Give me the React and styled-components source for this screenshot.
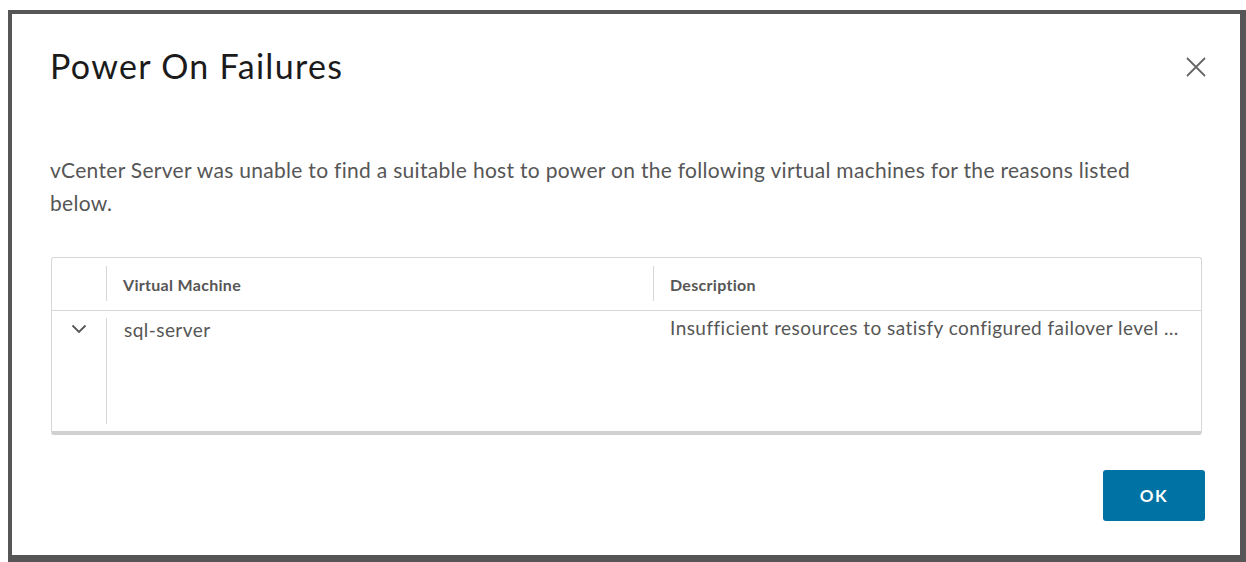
import React from "react";
import styled, { createGlobalStyle } from "styled-components";

const GlobalStyle = createGlobalStyle`
  html, body { margin: 0; padding: 0; background: #ffffff; overflow: hidden; }
  body { font-family: Lato, "Open Sans", "Liberation Sans", sans-serif; }
`;

const Backdrop = styled.div`
  margin: 10px 0 0 8px;
  width: 1238px;
  height: 552px;
  background: #565656;
  padding: 4px 0 0 4px;
  box-sizing: border-box;
`;

const Dialog = styled.div`
  width: 1228px;
  height: 541px;
  background: #ffffff;
  box-sizing: border-box;
  padding: 0 35px 0 38px;
  display: flex;
  flex-direction: column;
  color: #565656;
`;

const Header = styled.div`
  display: flex;
  align-items: center;
  justify-content: space-between;
  height: 103px;
`;

const Title = styled.h1`
  margin: 0;
  font-size: 34px;
  font-weight: 400;
  color: #1b1b1b;
  letter-spacing: 1.3px;
`;

const CloseButton = styled.button`
  border: 0;
  background: none;
  padding: 0;
  width: 22px;
  height: 22px;
  margin-right: -2px;
  margin-top: 3px;
  display: flex;
  align-items: center;
  justify-content: center;
  color: #666666;
`;

const Message = styled.p`
  margin: 36px 0 0 0;
  font-size: 21px;
  line-height: 33px;
  letter-spacing: 0.3px;
  color: #565656;
  max-width: 1110px;
`;

const Grid = styled.div`
  margin: 38px 0 0 1px;
  width: 1151px;
  height: 178px;
  border: 1px solid #d7d7d7;
  border-bottom: 4px solid #d0d0d0;
  border-radius: 3px;
  box-sizing: border-box;
  display: grid;
  grid-template-columns: 54px 547px 1fr;
  grid-template-rows: 53px 1fr;
`;

const HeadCell = styled.div`
  display: flex;
  align-items: center;
  border-bottom: 1px solid #d7d7d7;
  position: relative;
  padding-left: ${(p) => (p.$pad ? "17px" : "0")};
  font-size: 16px;
  font-weight: 700;
  letter-spacing: 0.3px;
  color: #565656;
  ${(p) =>
    p.$divider &&
    `&::before {
      content: "";
      position: absolute;
      left: 0;
      top: 8px;
      bottom: 9px;
      border-left: 1px solid #d7d7d7;
    }`}
`;

const BodyCell = styled.div`
  display: flex;
  align-items: flex-start;
  padding: ${(p) => (p.$pad ? (p.$line ? "0 20px 0 17px" : "5px 20px 0 17px") : "0")};
  margin: ${(p) => (p.$line ? "7px 0 7px 0" : p.$center ? "13px 0 0 0" : "0")};
  font-size: 19px;
  line-height: 23px;
  letter-spacing: 0.45px;
  color: #565656;
  border-left: ${(p) => (p.$line ? "1px solid #d7d7d7" : "none")};
  min-width: 0;
  justify-content: ${(p) => (p.$center ? "center" : "flex-start")};
`;

const Ellipsis = styled.span`
  white-space: nowrap;
  overflow: hidden;
  text-overflow: ellipsis;
  min-width: 0;
`;

const Footer = styled.div`
  display: flex;
  justify-content: flex-end;
  margin-top: 35px;
`;

const PrimaryButton = styled.button`
  width: 102px;
  height: 51px;
  border: 0;
  border-radius: 3px;
  background: #0072a3;
  color: #ffffff;
  font-family: Lato, "Open Sans", sans-serif;
  font-size: 17px;
  font-weight: 700;
  letter-spacing: 1.5px;
`;

function CloseIcon() {
  return (
    <svg width="20" height="20" viewBox="0 0 20 20">
      <path d="M1 1 L19 19 M19 1 L1 19" stroke="#666" strokeWidth="1.8" fill="none" />
    </svg>
  );
}

function Chevron() {
  return (
    <svg width="16" height="10" viewBox="0 0 16 10">
      <path d="M1.5 1.5 L8 8 L14.5 1.5" stroke="#565656" strokeWidth="1.8" fill="none" />
    </svg>
  );
}

export default function App() {
  return (
    <>
      <GlobalStyle />
      <Backdrop>
        <Dialog>
          <Header>
            <Title>Power On Failures</Title>
            <CloseButton aria-label="Close">
              <CloseIcon />
            </CloseButton>
          </Header>
          <Message>
            vCenter Server was unable to find a suitable host to power on the following virtual
            machines for the reasons listed below.
          </Message>
          <Grid>
            <HeadCell />
            <HeadCell $pad $divider>Virtual Machine</HeadCell>
            <HeadCell $pad $divider>Description</HeadCell>
            <BodyCell $center>
              <Chevron />
            </BodyCell>
            <BodyCell $pad $line>sql-server</BodyCell>
            <BodyCell $pad>
              <Ellipsis>Insufficient resources to satisfy configured failover level for vSphere HA.</Ellipsis>
            </BodyCell>
          </Grid>
          <Footer>
            <PrimaryButton>OK</PrimaryButton>
          </Footer>
        </Dialog>
      </Backdrop>
    </>
  );
}
